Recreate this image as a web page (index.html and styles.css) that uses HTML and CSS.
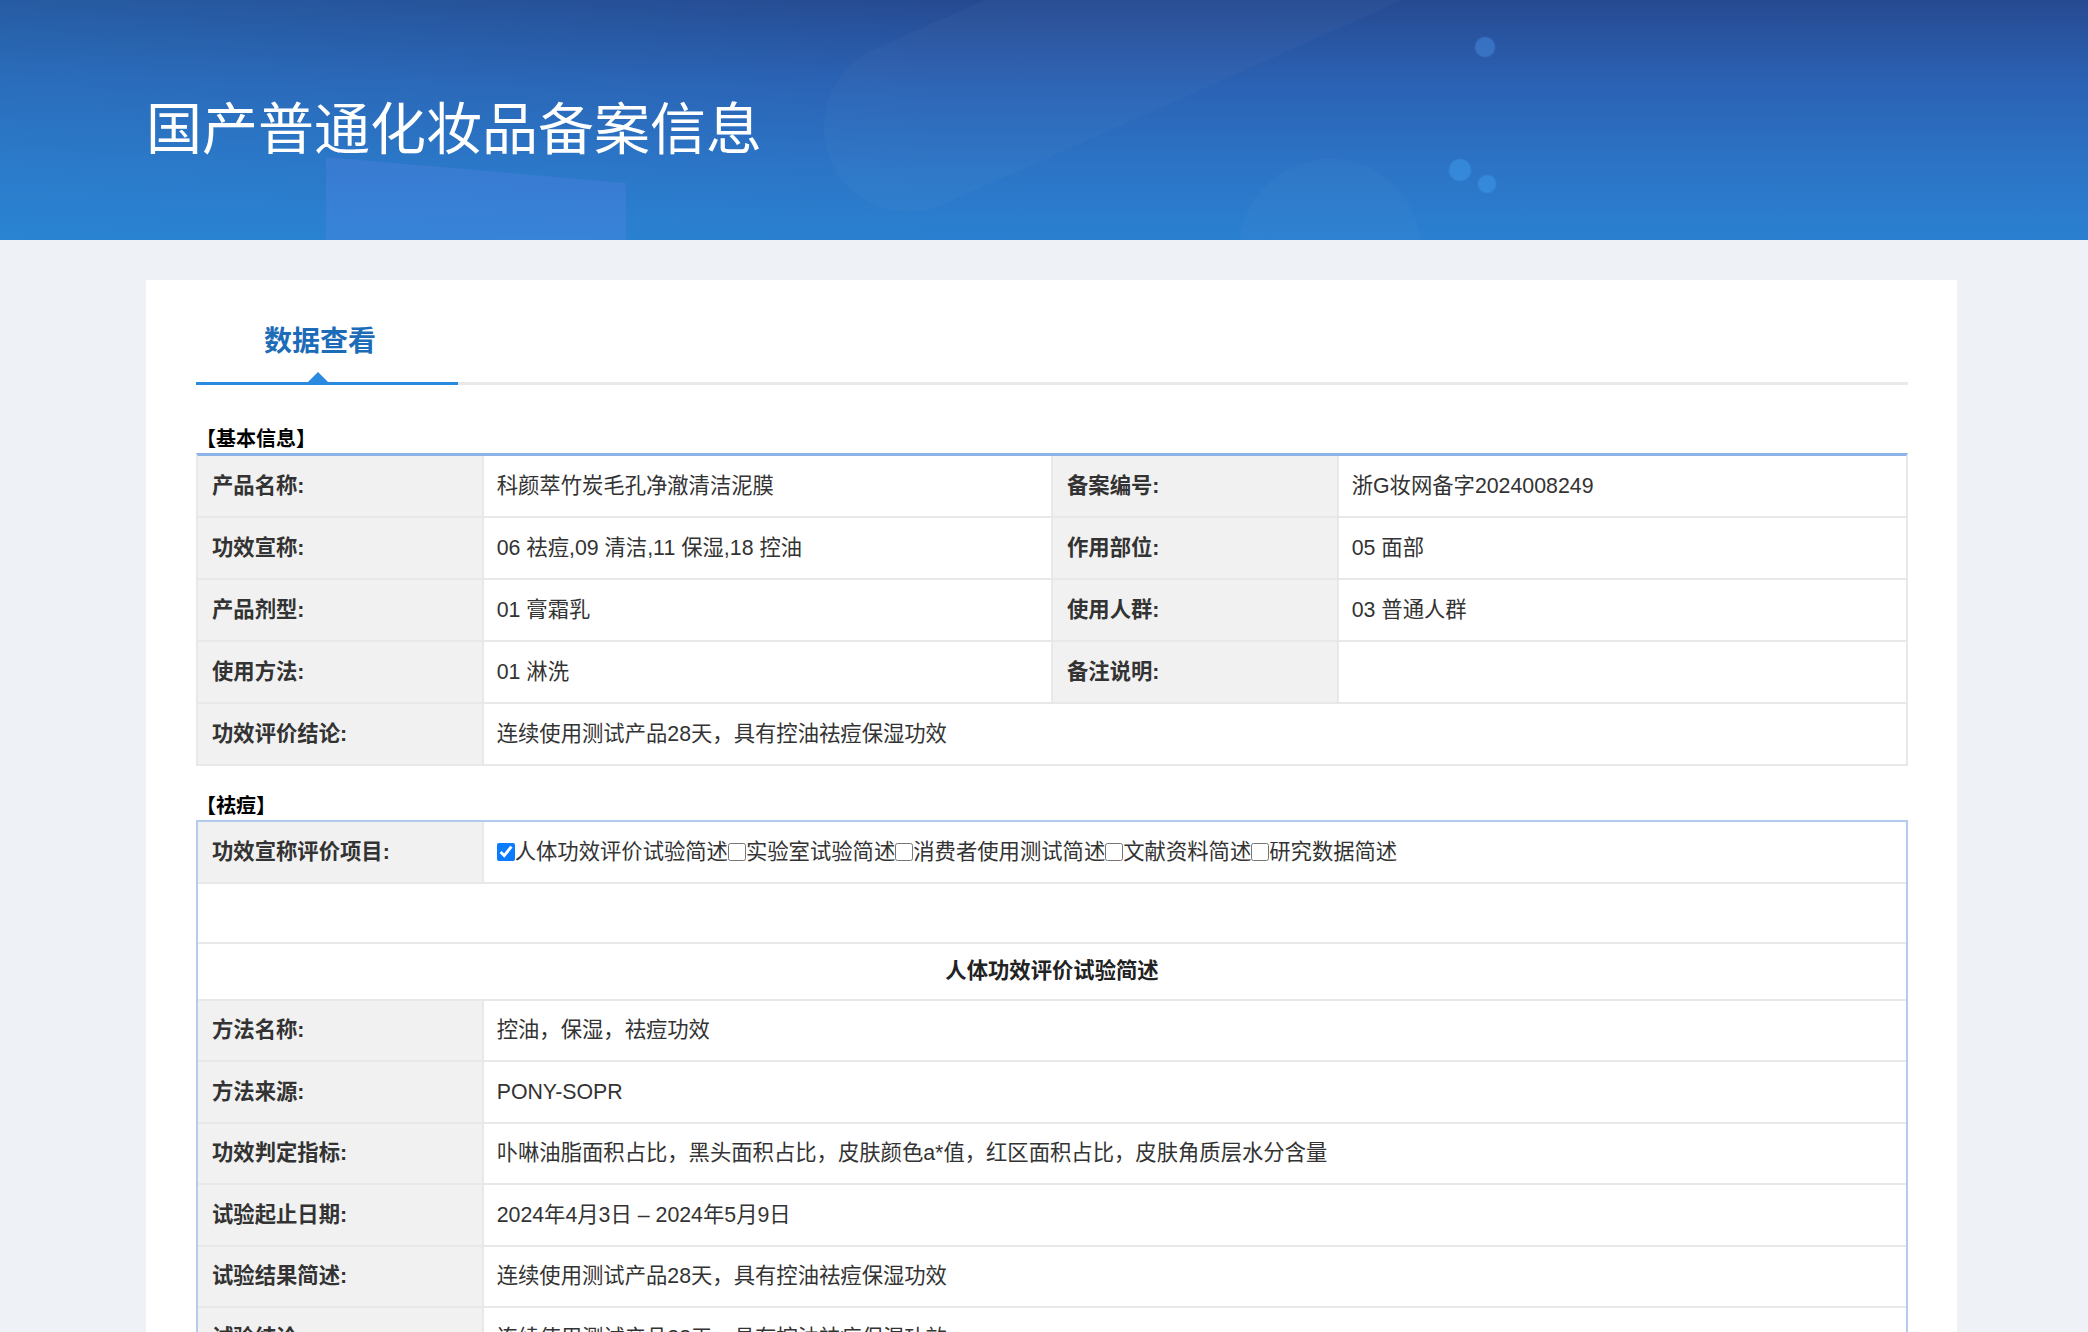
FILE: index.html
```html
<!DOCTYPE html>
<html lang="zh-CN">
<head>
<meta charset="utf-8">
<title>国产普通化妆品备案信息</title>
<link rel="stylesheet" href="styles.css">
</head>
<body>
<header class="banner">
  <h1 class="banner-title">国产普通化妆品备案信息</h1>
</header>
<main class="page">
  <section class="card">
    <div class="tabs">
      <div class="tab active">数据查看</div>
    </div>

    <h2 class="section-title">【基本信息】</h2>
    <div class="info-grid basic">
      <div class="cell label">产品名称:</div>
      <div class="cell value">科颜萃竹炭毛孔净澈清洁泥膜</div>
      <div class="cell label">备案编号:</div>
      <div class="cell value">浙G妆网备字2024008249</div>

      <div class="cell label">功效宣称:</div>
      <div class="cell value">06 祛痘,09 清洁,11 保湿,18 控油</div>
      <div class="cell label">作用部位:</div>
      <div class="cell value">05 面部</div>

      <div class="cell label">产品剂型:</div>
      <div class="cell value">01 膏霜乳</div>
      <div class="cell label">使用人群:</div>
      <div class="cell value">03 普通人群</div>

      <div class="cell label">使用方法:</div>
      <div class="cell value">01 淋洗</div>
      <div class="cell label">备注说明:</div>
      <div class="cell value"></div>

      <div class="cell label">功效评价结论:</div>
      <div class="cell value span-3">连续使用测试产品28天，具有控油祛痘保湿功效</div>
    </div>

    <h2 class="section-title second">【祛痘】</h2>
    <div class="info-grid claim">
      <div class="cell label">功效宣称评价项目:</div>
      <div class="cell value span-3">
        <span class="checks"><label class="check"><input type="checkbox" checked>人体功效评价试验简述</label><label class="check"><input type="checkbox">实验室试验简述</label><label class="check"><input type="checkbox">消费者使用测试简述</label><label class="check"><input type="checkbox">文献资料简述</label><label class="check"><input type="checkbox">研究数据简述</label></span>
      </div>

      <div class="cell empty span-all"></div>

      <div class="cell subhead span-all">人体功效评价试验简述</div>

      <div class="cell label">方法名称:</div>
      <div class="cell value span-3">控油，保湿，祛痘功效</div>

      <div class="cell label">方法来源:</div>
      <div class="cell value span-3">PONY-SOPR</div>

      <div class="cell label">功效判定指标:</div>
      <div class="cell value span-3">卟啉油脂面积占比，黑头面积占比，皮肤颜色a*值，红区面积占比，皮肤角质层水分含量</div>

      <div class="cell label">试验起止日期:</div>
      <div class="cell value span-3">2024年4月3日 – 2024年5月9日</div>

      <div class="cell label">试验结果简述:</div>
      <div class="cell value span-3">连续使用测试产品28天，具有控油祛痘保湿功效</div>

      <div class="cell label">试验结论:</div>
      <div class="cell value span-3">连续使用测试产品28天，具有控油祛痘保湿功效</div>
    </div>
  </section>
</main>
</body>
</html>
```

FILE: styles.css
```css
html, body {
  margin: 0;
  padding: 0;
  overflow: hidden;
}

body {
  background: #eef2f6;
  font-family: "Liberation Sans", "Noto Sans CJK SC", sans-serif;
  color: #333;
}

/* ---------- banner ---------- */
.banner {
  position: relative;
  height: 240px;
  overflow: hidden;
  background:
    radial-gradient(circle at 1485px 47px, rgba(70, 140, 225, 0.5) 0 9px, transparent 11px),
    radial-gradient(circle at 1460px 170px, rgba(60, 150, 230, 0.6) 0 10px, transparent 12px),
    radial-gradient(circle at 1487px 184px, rgba(60, 150, 230, 0.6) 0 8px, transparent 10px),
    radial-gradient(circle at 1330px 250px, rgba(255, 255, 255, 0.018) 0 90px, transparent 92px),
    linear-gradient(90deg, rgba(40, 145, 215, 0.25) 0%, rgba(40, 145, 215, 0) 45%),
    linear-gradient(180deg, #264a91 0%, #2b62b4 35%, #2c74c6 70%, #2a80d0 100%);
}

.banner::before {
  content: "";
  position: absolute;
  left: 800px;
  top: -70px;
  width: 720px;
  height: 170px;
  border-radius: 85px;
  background: rgba(255, 255, 255, 0.025);
  transform: rotate(-24deg);
}

.banner::after {
  content: "";
  position: absolute;
  left: 326px;
  top: 157px;
  width: 300px;
  height: 90px;
  background: rgba(110, 140, 250, 0.2);
  clip-path: polygon(0 0, 100% 26px, 100% 100%, 0 100%);
}

.banner-title {
  position: relative;
  z-index: 1;
  margin: 0;
  padding: 85px 0 0 146px;
  font-family: "Noto Sans CJK SC", sans-serif;
  font-size: 56px;
  line-height: 80px;
  font-weight: 400;
  color: #fff;
}

/* ---------- card ---------- */
.page {
  padding: 40px 0 0 146px;
}

.card {
  width: 1811px;
  box-sizing: border-box;
  background: #fff;
  padding: 39px 49px 40px 50px;
}

.tabs {
  display: flex;
  border-bottom: 3px solid #e9e9e9;
}

.tab {
  position: relative;
  width: 262px;
  box-sizing: border-box;
  padding: 0 0 23px 68px;
  font-family: "Noto Sans CJK SC", sans-serif;
  font-size: 28px;
  line-height: 40px;
  font-weight: 700;
  color: #1d6cb7;
}

.tab.active {
  border-bottom: 3px solid #2a8ae0;
  margin-bottom: -3px;
}

.tab.active::after {
  content: "";
  position: absolute;
  left: 112px;
  bottom: 0;
  width: 0;
  height: 0;
  border-left: 10px solid transparent;
  border-right: 10px solid transparent;
  border-bottom: 10px solid #2a8ae0;
}

.section-title {
  margin: 39px 0 0;
  padding-bottom: 1px;
  font-family: "Noto Sans CJK SC", sans-serif;
  font-size: 20px;
  line-height: 28px;
  font-weight: 700;
  color: #000;
}

.section-title.second {
  margin-top: 25px;
}

/* ---------- grids ---------- */
.info-grid {
  display: grid;
  grid-template-columns: 1fr 2fr 1fr 2fr;
  gap: 2px;
  background: #e8e8e8;
}

.info-grid.basic {
  border-top: 3px solid #8db3e8;
  border-left: 2px solid #e8e8e8;
  border-right: 2px solid #e8e8e8;
  border-bottom: 2px solid #e8e8e8;
}

.info-grid.claim {
  border: 2px solid #b3cbed;
}

.cell {
  display: flex;
  align-items: center;
  min-height: 60px;
  box-sizing: border-box;
  padding: 0 13px;
  font-size: 21.33px;
  line-height: 30px;
  background: #fff;
  color: #333;
}

.claim .cell {
  min-height: 59.5px;
}

.cell.label {
  background: #f1f1f1;
  font-weight: 700;
  padding-left: 14px;
  color: #333;
}

.span-3 {
  grid-column: span 3;
}

.span-all {
  grid-column: 1 / -1;
}

.claim .cell.empty {
  min-height: 58px;
  height: 58px;
}

.claim .cell.subhead {
  min-height: 55px;
  height: 55px;
  justify-content: center;
  font-weight: 700;
  color: #222;
}

.checks {
  white-space: nowrap;
}

.check input {
  width: 18px;
  height: 18px;
  margin: 0;
  vertical-align: -2px;
  accent-color: #0b7bff;
}
```
